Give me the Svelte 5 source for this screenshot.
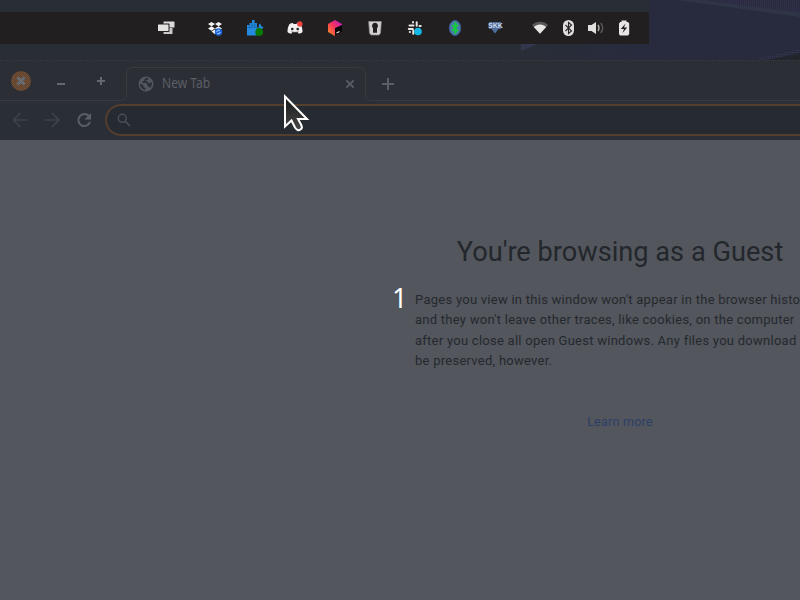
<script>
  const paragraph = [
    "Pages you view in this window won't appear in the browser history",
    "and they won't leave other traces, like cookies, on the computer",
    "after you close all open Guest windows. Any files you download",
    "be preserved, however."
  ];
</script>

<div class="screen">
  <header class="desktop">
    <svg class="wallpaper" width="800" height="60" viewBox="0 0 800 60">
      <defs>
        <pattern id="stripes" width="2" height="2" patternUnits="userSpaceOnUse">
          <rect width="2" height="2" fill="#29293f" /><rect width="1" height="2" fill="#303149" />
        </pattern>
        <pattern id="grain" width="2" height="2" patternUnits="userSpaceOnUse">
          <rect width="1" height="1" fill="#383a54" />
        </pattern>
        <linearGradient id="dusk"><stop stop-color="#282d36" /><stop offset="1" stop-color="#282b3e" /></linearGradient>
      </defs>
      <rect width="800" height="60" fill="#282d36" />
      <path d="M520 44H649V60H520Z" fill="url(#dusk)" />
      <path d="M649 0H800V60H649Z" fill="#282b3d" />
      <path d="M678 0H800V17Z" fill="#2f3546" />
      <path d="M700 0H800V13Z" fill="url(#stripes)" />
      <path d="M521 43H540L521 51Z" fill="#34364e" />
      <path d="M750 60L800 49V60Z" fill="url(#grain)" />
      <path d="M767 60L800 53V60Z" fill="#20262c" />
    </svg>
    <div class="tray">
      <div class="cell">
        <svg width="18" height="18" viewBox="0 0 18 18"><rect x="6.500" y="2.500" width="11" height="6" rx=".5" fill="#dcdad9" /><rect x="6.500" y="9" width="9" height="6" rx=".5" fill="#cbc9c8" /><rect x=".5" y="4.500" width="12" height="8.500" rx="1" fill="#221f20" /><rect x="1" y="5.500" width="10.500" height="6.500" rx=".5" fill="#e4e2e1" /></svg>
      </div>
      <div class="cell apps">
        <svg width="18" height="18" viewBox="0 0 18 18"><path fill="#f5f3f3" d="M5.500 3L9 5 5.500 7.200 2 5zM12.500 3L16 5l-3.500 2.200L9 5zM5.500 7.300L9 9.500 5.500 11.700 2 9.500zM12.500 7.300L16 9.500l-3.500 2.200L9 9.500zM5.500 12.500L9 10.500l2 2-2 2.800z" /><circle cx="12.500" cy="13" r="3.700" fill="#1c64d8" /><path d="M10.800 13a1.800 1.800 0 013-1.300M14.200 13a1.800 1.800 0 01-3 1.300" fill="none" stroke="#b8d5ff" /></svg>
      </div>
      <div class="cell">
        <svg width="18" height="18" viewBox="0 0 18 18"><path fill="#238adf" d="M1 6h2.500V4H6V1h2.500v3H11v4.500h2c-.5-2 0-3 1-4 1 1 1 2 1.500 3l2 .5c-1 2-2 3-3.500 3.500l-3.500 5H1z" /><path d="M1 8.500h10M3.700 6v4M6.200 4v5M8.700 4v5M4 6.200h7" stroke="#1762a5" stroke-width=".6" /><circle cx="13.200" cy="13" r="3.900" fill="#087800" /></svg>
      </div>
      <div class="cell">
        <svg width="18" height="18" viewBox="0 0 18 18"><path fill="#f2f0f0" d="M3.500 5C5 4 6 4 7 4l.5 1h3l.5-1c1 0 2 0 3.500 1 1.500 2.500 2 5 2 8-1 1-2.500 1.500-3.700 1.700l-1-1.500H6.200l-1 1.500C4 14.500 2.500 14 1.500 13c0-3 .5-5.500 2-8z" /><path d="M5.500 12.600c2 1 5 1 7 0" stroke="#221f20" stroke-width=".5" fill="none" /><circle cx="6.300" cy="10" r="1.300" fill="#221f20" /><circle cx="11.700" cy="10" r="1.300" fill="#221f20" /><circle cx="13.800" cy="5" r="2.700" fill="#ef4140" /></svg>
      </div>
      <div class="cell">
        <svg width="18" height="18" viewBox="0 0 18 18"><defs><linearGradient id="cube" x1="0" y1="1" x2="1" y2="0"><stop stop-color="#ff951e" /><stop offset=".5" stop-color="#f3345d" /><stop offset="1" stop-color="#b51bd0" /></linearGradient></defs><path d="M9 1l7 4v8l-7 4-7-4V5z" fill="url(#cube)" /><path d="M9 9l7-3v7l-7 4z" fill="#080407" /><path d="M10.500 14l3-1.500" stroke="#eee" stroke-width="1.100" /></svg>
      </div>
      <div class="cell">
        <svg width="18" height="18" viewBox="0 0 18 18"><path d="M2.700 2.500h12.600l-.8 11.500-1.500 2H5l-1.500-2z" fill="#d2d0ce" stroke="#989090" stroke-width=".7" /><path d="M9 3.700a3.200 3.200 0 012 5.500v4.500H7V9.200a3.200 3.200 0 012-5.500z" fill="#211f20" /></svg>
      </div>
      <div class="cell">
        <svg width="18" height="18" viewBox="0 0 18 18"><g stroke="#e9e7e6" stroke-width="2" stroke-linecap="round"><path d="M7 3v.5M7.500 6.500h-4M10.700 3.300v3.500M14.700 7h-1.200M2.800 10h4M7.300 11.500v3.300M3.800 13h.2" /></g><circle cx="12" cy="12.500" r="3.800" fill="#12b9e8" /></svg>
      </div>
      <div class="cell">
        <svg width="18" height="18" viewBox="0 0 18 18"><ellipse cx="9" cy="9" rx="5.700" ry="7.500" fill="#4c79aa" stroke="#345b8e" /><path d="M6 6l5.500 5.500L9 14V4l2.500 2.500L6 12" fill="none" stroke="#11cf35" stroke-width="1.500" /></svg>
      </div>
      <div class="cell skk">
        <svg width="18" height="18" viewBox="0 0 18 18"><path d="M3 3h12v7h-2.500L9 14.500 5.500 10H3z" fill="#506f9d" /></svg><span>SKK</span>
      </div>
      <div class="status">
        <div><svg width="18" height="18" viewBox="0 0 18 18"><path d="M1 6C5 1.500 13 1.500 17 6L9 14.700z" fill="#5a5859" /><path d="M2.800 8C6 4.500 12 4.500 15.200 8L9 14.700z" fill="#e8e6e5" /></svg></div>
        <div><svg width="18" height="18" viewBox="0 0 18 18"><rect x="4" y="1" width="11" height="16" rx="5.500" fill="#e1dfde" /><path d="M6.500 6l6 6-3 2.500v-11l3 2.500-6 6" fill="none" stroke="#282526" stroke-width="1.100" /></svg></div>
        <div><svg width="18" height="18" viewBox="0 0 18 18"><path d="M1 6h3.500L9 3v12l-4.500-3H1z" fill="#e2e0df" /><path d="M11 6q2 3 0 6" fill="none" stroke="#aaa8a7" stroke-width="1.500" /><path d="M13.700 4q4 5 0 10" fill="none" stroke="#5b595a" stroke-width="1.400" /></svg></div>
        <div><svg width="18" height="18" viewBox="0 0 18 18"><path d="M6.500 1.500h5V3H13l1.200 1.500V15L13 16.500H5L4 15V4.500L5.200 3h1.300z" fill="#e8e6e5" /><path d="M10.500 4.500L5.800 10H9l-1.500 4L12.200 8.500H9z" fill="#221f20" /></svg></div>
      </div>
    </div>
  </header>

  <section class="browser">
    <div class="tabstrip">
      <svg class="controls" width="120" height="40" viewBox="0 0 120 40">
        <defs><pattern id="dots" width="2" height="2" patternUnits="userSpaceOnUse"><rect width="2" height="2" fill="#584437" /><rect width="1" height="1" fill="#80502f" /><rect x="1" y="1" width="1" height="1" fill="#744c30" /></pattern></defs>
        <circle cx="21" cy="21" r="10" fill="url(#dots)" /><path d="M17.500 17.500l7 7m0-7l-7 7" stroke="#666c74" stroke-width="2.800" />
        <path d="M57 24h8M97 21h8M101 17v8" stroke="#63676e" stroke-width="2" />
      </svg>
      <div class="tab">
        <svg width="16" height="16" viewBox="0 0 16 16"><circle cx="8" cy="8" r="7.500" fill="#52575e" /><path d="M8.500 1.800C7 2.500 6 3.500 6.300 5H4.500v2H8l1.500 1.500v2h1.500l1 1.500c1.700-1.500 2.300-4 1.600-6L11.500 7H9.800V5.200H8V4h2V2zM2 8.300c.2 3 2.400 5.500 5.500 5.700v-2L5.500 11V9.500L3.500 8z" fill="#2b2f36" /></svg>
        <span>New Tab</span>
        <svg class="close" width="10" height="10" viewBox="0 0 10 10"><path d="M1.300 1.300l7.400 7.400M8.700 1.300L1.300 8.700" stroke="#5b6067" stroke-width="1.700" /></svg>
      </div>
      <svg class="new" width="14" height="14" viewBox="0 0 14 14"><path d="M7 1v12M1 7h12" stroke="#5a5f66" stroke-width="2" /></svg>
      <svg class="outline" width="800" height="40" viewBox="0 0 800 40"><path d="M0 40H120Q126.500 40 126.500 34V13.500Q126.500 7 133 7H359Q365.500 7 365.500 13.500V34Q365.500 40 372 40H800" transform="translate(0 -.5)" fill="none" stroke="#383b40" /></svg>
    </div>
    <div class="toolbar">
      <svg width="105" height="40" viewBox="0 0 105 40"><g fill="none" stroke="#3e4349" stroke-width="1.700"><path d="M27.500 20H14M20.500 13L13.500 20l7 7M45 20h13.500M52 13l7 7-7 7" /></g><path d="M88.800 16A6 6 0 1090 22" fill="none" stroke="#5a5f66" stroke-width="2" /><path d="M91 13v6.500h-6.500z" fill="#5a5f66" /></svg>
      <div class="omnibox"><svg width="14" height="14" viewBox="0 0 14 14"><circle cx="5.300" cy="5.300" r="4" fill="none" stroke="#484e55" stroke-width="1.500" /><path d="M8.300 8.300L13 13" stroke="#484e55" stroke-width="1.700" /></svg></div>
    </div>
    <main>
      <h1>You're browsing as a Guest</h1>
      <div class="copy">{#each paragraph as line}<p>{line}</p>{/each}</div>
      <a href="#learn">Learn more</a>
    </main>
  </section>
  <span class="count">1</span>
  <svg class="cursor" width="30" height="42" viewBox="0 0 30 42"><defs><linearGradient id="pointer" x2="0" y2="1"><stop stop-color="#171717" /><stop offset="1" stop-color="#484848" /></linearGradient></defs><path d="M3 4.500V34.500L9.500 28.500 13 35.500Q15.500 39.500 18.500 37.500 21 36 19 32.500L16 27H25Z" fill="url(#pointer)" stroke="#fff" stroke-width="2" /></svg>
</div>

<style>
  :global(body) { margin: 0; overflow: hidden; background: #53565d; }
  .screen { position: relative; width: 800px; height: 600px; overflow: hidden; font-family: Roboto, sans-serif; }
  svg { display: block; flex-shrink: 0; }
  .desktop { position: relative; box-sizing: border-box; height: 60px; padding-top: 12px; }
  .wallpaper { position: absolute; top: 0; left: 0; }
  .tray { position: relative; box-sizing: border-box; display: flex; align-items: center; width: 649px; height: 32px; padding-left: 146px; background: #221f20; }
  .cell { display: flex; justify-content: center; width: 40px; }
  .apps { margin-left: 9px; }
  .skk { position: relative; }
  .skk span { position: absolute; top: 3px; left: 13px; font: bold 7px/8px "Liberation Sans", sans-serif; color: #c9d3e4; }
  .status { display: flex; margin-left: 11px; }
  .status div { display: flex; justify-content: center; width: 28px; }
  .browser { height: 540px; }
  .tabstrip { position: relative; box-sizing: border-box; display: flex; height: 40px; background: #2b2e35; border-top: 1px dashed #34373c; }
  .controls { margin-top: -1px; }
  .outline { position: absolute; top: 0; left: 0; }
  .tab { box-sizing: border-box; display: flex; align-items: center; width: 246px; height: 33px; margin-top: 6px; padding: 0 11px 0 18px; color: #5b5f65; font: 14px/20px "Noto Sans", sans-serif; }
  .tab span { margin: -2px 0 0 8px; transform: scaleX(.86); transform-origin: left; }
  .close { margin-left: auto; }
  .new { margin: 16px 0 0 15px; }
  .toolbar { display: flex; height: 40px; background: #2a2e36; }
  .omnibox { box-sizing: border-box; flex: 1; height: 32px; margin-top: 4px; padding: 7px 10px; border: 2px solid #543e2e; border-right: 0; border-radius: 16px 0 0 16px; background: #262b32; }
  main { display: flex; flex-direction: column; align-items: center; box-sizing: border-box; width: 410px; height: 460px; margin-left: 415px; padding-top: 94px; background: #53565d; }
  h1 { margin: 0; color: #23272c; font-size: 27.200px; line-height: 36px; font-weight: 400; white-space: nowrap; }
  .copy { align-self: flex-start; margin-top: 20px; color: #25292e; font-size: 13px; line-height: 20.300px; letter-spacing: .26px; white-space: nowrap; }
  p { margin: 0; }
  a { margin-top: 41px; color: #2c3f67; font-size: 12.500px; line-height: 20px; font-weight: 400; letter-spacing: .25px; text-decoration: none; }
  .count { position: absolute; top: 281px; left: 392px; color: #fff; font: 27px/34px "Noto Sans", sans-serif; }
  .cursor { position: absolute; top: 92px; left: 282px; }
</style>
